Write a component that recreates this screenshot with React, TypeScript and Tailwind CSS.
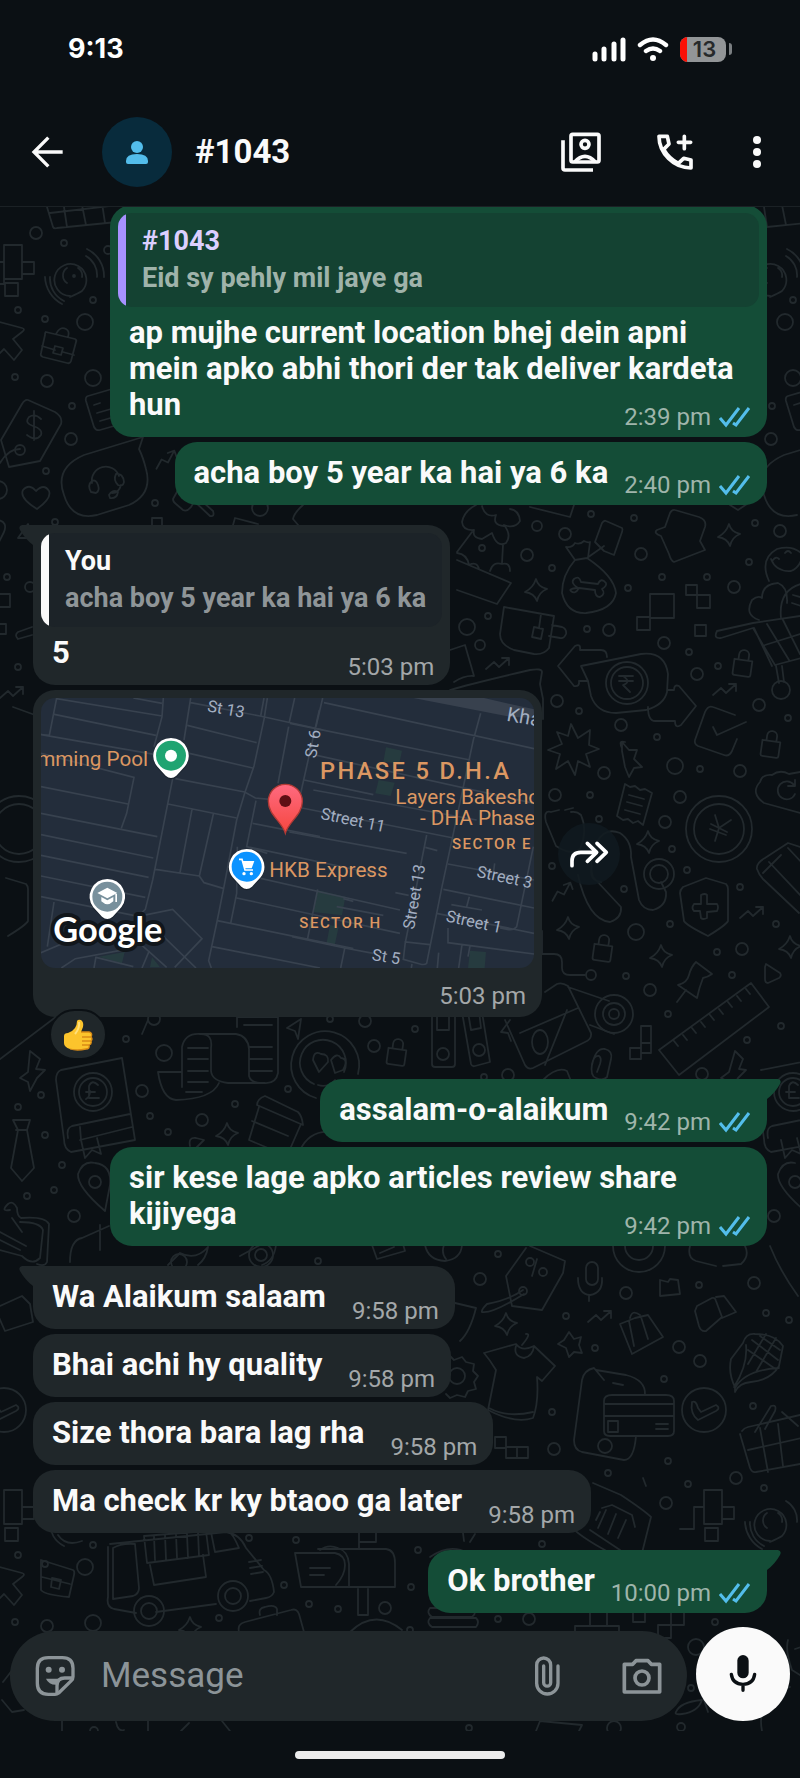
import type { ReactNode } from "react";
import clsx from "clsx";

const circles = [
  // x, y, r
  [36, 233, 6], [64, 243, 3], [108, 250, 4], [93, 300, 3], [18, 310, 3], [45, 319, 3], [85, 322, 8],
  [15, 377, 3], [47, 381, 6], [93, 378, 8], [72, 406, 3], [71, 439, 6], [46, 471, 3], [-2, 490, 9],
  [155, 503, 3], [260, 508, 8], [55, 522, 3], [7, 577, 3], [30, 587, 5], [18, 667, 3],
  [537, 526, 5], [591, 514, 3], [634, 518, 3], [565, 534, 6], [527, 555, 6], [482, 548, 3], [641, 554, 6],
  [552, 568, 3], [662, 577, 3], [707, 577, 3], [628, 588, 3], [734, 587, 6], [755, 523, 3], [780, 531, 6],
  [749, 562, 3], [488, 616, 3], [467, 627, 8], [480, 645, 5], [587, 629, 3], [609, 630, 6], [664, 643, 6],
  [689, 652, 3], [718, 666, 3], [697, 674, 6], [557, 701, 6], [579, 711, 3], [621, 725, 6], [657, 737, 3],
  [759, 705, 6], [788, 718, 3], [604, 773, 6], [675, 766, 8], [700, 769, 3], [740, 771, 6], [555, 795, 6],
  [590, 795, 3], [680, 797, 6], [599, 819, 3], [665, 822, 6], [672, 849, 3], [552, 866, 3], [687, 870, 3],
  [740, 887, 3], [624, 889, 3], [670, 924, 3], [636, 932, 8], [776, 924, 3], [717, 952, 3], [742, 949, 6],
  [591, 975, 5], [626, 976, 3], [732, 975, 3], [650, 990, 6],
  [668, 1014, 3], [747, 1040, 3], [781, 1026, 3], [365, 1021, 6], [330, 1019, 3], [415, 1029, 3],
  [154, 1019, 6], [126, 1039, 3], [164, 1053, 8], [374, 1046, 6], [142, 1091, 6], [41, 1095, 3],
  [18, 1107, 3], [150, 1116, 3], [235, 1104, 3], [288, 1089, 3], [202, 1120, 6], [168, 1132, 3],
  [45, 1135, 3], [62, 1165, 3], [54, 1190, 3], [27, 1196, 3], [74, 1216, 6], [484, 1077, 3], [508, 1075, 6],
  [702, 1074, 6], [318, 1261, 3], [498, 1254, 3], [480, 1279, 6], [699, 1285, 3], [626, 1293, 6],
  [754, 1283, 6], [566, 1316, 3], [766, 1313, 3], [789, 1320, 3], [679, 1347, 6], [595, 1348, 3],
  [700, 1361, 6], [664, 1379, 3], [552, 1412, 3], [753, 1406, 3], [554, 1449, 6], [668, 1461, 3],
  [608, 1473, 3], [736, 1478, 6], [688, 1484, 3], [764, 1488, 3], [666, 1503, 6], [542, 1544, 3],
  [418, 1550, 3], [249, 1538, 3], [296, 1540, 3], [284, 1585, 3], [309, 1604, 3], [338, 1609, 3],
  [411, 1587, 3], [385, 1608, 6], [410, 1630, 3], [219, 1618, 3], [498, 1619, 3], [529, 1619, 6],
  [715, 1622, 3], [696, 1647, 8], [691, 1688, 3], [614, 1728, 7], [681, 1727, 4], [469, 1728, 3],
];

const sparkles = [
  [536, 590], [729, 535], [648, 842], [568, 928], [661, 956], [790, 947], [227, 1134], [506, 1324],
  [190, 1628],
];

const locks = [[743, 663], [771, 744], [603, 948], [397, 1052]];

const arrows = [
  [498, 664, 0], [725, 690, 0], [752, 913, 0], [600, 1317, 0], [562, 892, -20], [166, 460, -20],
  [12, 693, 0],
];

function DoodleSheet() {
  return (
    <>
      {circles.map(([x, y, r], i) => (
        <circle key={i} cx={x} cy={y} r={r} />
      ))}
      {sparkles.map(([x, y], i) => (
        <path
          key={i}
          transform={`translate(${x} ${y})`}
          d="M0-11Q2-3 11-1Q3 2 1 11Q-2 3-11 2Q-3-2 0-11Z"
        />
      ))}
      {locks.map(([x, y], i) => (
        <path
          key={i}
          transform={`translate(${x} ${y}) rotate(8)`}
          d="M-9-3h18v14q0 2-2 2h-14q-2 0-2-2ZM-5-3v-5a5 5 0 0 1 10 0v5"
        />
      ))}
      {arrows.map(([x, y, turn], i) => (
        <path
          key={i}
          transform={`translate(${x} ${y}) rotate(${turn})`}
          d="M-12 5l8-7 5 5L11-6M4-6h7v7"
        />
      ))}

      {/* shopping basket, pixels, podcast */}
      <path d="M47 207l6 20q1 2 4 1l60-6M64 207l3 20M82 205l4 20M102 203l3 20M50 213l60-7" />
      <path d="M4 245h18v34H4ZM22 262h12v12H22ZM5 283h13v13H5ZM-8 262H4v22H-8" />
      <path d="M70 296a16 16 0 1 1 12-5q-3 2-12 6ZM67 283a9 9 0 0 1 0-15M78 268a9 9 0 0 1 4 9M86 256a22 22 0 0 1 11 21M87 249a30 30 0 0 1 17 28M50 277a25 25 0 0 0 14 24M45 277a32 32 0 0 0 17 27" />
      <circle cx="74" cy="276" r="1" />
      {/* cursor, briefcase, note, price tag */}
      <path d="M-8 320l30 8q4 1 0 4l-9 7 9 11-8 10-10-11-8 8" />
      <path d="M46 332l29 7q2 1 1 3l-5 19q-1 3-4 2l-24-6q-3-1-2-4l4-18q0-3 1-3ZM42 346l13 4M63 352l11 3M55 346l8 2-2 7-8-2ZM56 334q4-8 10-5 4 2 2 8" />
      <path d="M112 389l-24 7q-3 1-2 5l8 26q2 4 6 3l14-4M94 405l6-2M97 413l14-4M100 421l14-4" />
      <path d="M28 400l27 12q8 5 6 12l-21 37-31 6L1 440l21-36q3-5 6-4ZM34 411v29M41 419q-6-6-12-2-5 6 4 9 10 3 8 9-5 7-14 0M20 449q-12 0-20 14" />
      <circle cx="20" cy="450" r="5" />
      {/* support bubble and heart */}
      <path d="M143 437l-59 18q-30 13-20 40 8 26 33 20l32-10q24-11 17-36-3-12-7-20Z" />
      <path d="M92 483a14 14 0 0 1 27-7M92 481q-5 4-1 11l5 1q4-2 2-8-2-6-6-4ZM116 474q7-1 8 8-1 5-6 3-5-5-2-11ZM121 485q-2 8-9 8M109 495q3-6 9-3-1 7-8 6Z" />
      <path d="M37 509q-18-11-14-19 6-7 13 1 8-8 13 0 3 7-12 18Z" />
      <path d="M178 490l-5 9q0 3 3 5l7 6q4 2 8-3l3-5M193 500l17 16q5 1 3-5l-19-17M152 525v-7h10v7M233 525l2-7 23 6M303 505q-9 8-10 14l6 7" />
      <path d="M0 594h10v13H0M0 624h6v10H0M32 627l-14 5q-4 3 0 7l14-4M-2 520q10 2 6 12l-5 10M18 538l10-14 5 14Z" />

      {/* balloon dog, tea cup, money bag */}
      <path d="M476 505q-12 6-14 17 1 9 12 8-2 8 8 9l10-6q5 15 14 10 6-8-2-18 11 4 16-4-1-11-10-12M482 506q3 12 14 9-4 10 8 11M472 532l-15 20M503 545l-1 18M457 560l54 23-14 21-40-14M457 553q10 1 12 12 8-4 10 4M490 571q3-10 12-7 8-2 8 7" />
      <path d="M504 607l50 9-5 32q-5 7-15 6l-20-4q-14-5-14-16ZM541 614l-2 14M534 627l9 2-2 10-9-2ZM552 625l10 2q5 2 4 7-2 5-6 4l-11-2" />
      <path d="M450 650l15-5 9 31q-9-1-20 6" />
      <path d="M575 560q-13 15-13 33 5 21 24 20 27-3 30-20-2-17-29-35ZM575 560l-9-13q6 1 9-4 5 2 9-2 4 2 6 1l-2 16M587 558l17-12" />
      <path d="M578 588q-8-5-4-9 5-4 7 3l17 2q3-7 8-1 1 3-4 6 4 5-2 8-5 0-5-7l-16-2q-4 7-8 3-3-2 6-3Z" />
      <path d="M606 521l16 7q1 1 0 4l-8 23-10-4-9-9 7-19q2-3 4-2Z" />
      <path d="M450 690q20-6 80-20 12-2 12 2l-2 12 3 15v20" />
      <path d="M530 507l40 10 4-12M730 505l8 5 12-8" />
      {/* puzzle piece, pixels */}
      <path d="M675 510l24 7q8 3 6 10l-5 14 5 9-31 12q-3-1-5-8l-8-18q-8-3-4-6l8-3 5-14q2-4 5-3Z" />
      <path d="M650 594h24v24h-24ZM637 617h13v13h-13ZM686 585h11v10h-11ZM697 595h13v13h-13ZM695 625h11v11h-11Z" />
      {/* ice cream and trolley */}
      <path d="M769 581q-10-22 8-32 22-6 31 14M771 559q5 13 20 12 10-4 12-18M773 560q3-4 6-1M785 553q3-4 6 0M759 620q-15-5-7-20 6-5 10-2 0-14 16-15 10 4 9 20M781 618q-3-30 24-35M793 595l14 4M792 603l15 5" />
      <path d="M717 631q-4 8 4 7l32-10 22 37 30-8M717 631l36-8 47-7M754 628l18 38M767 624l22 36M783 620l17 34M765 645l35-11M776 666l3 17M782 666l2 16" />
      <circle cx="781" cy="690" r="9" />
      {/* rupee transfer */}
      <circle cx="627" cy="683" r="21" />
      <circle cx="627" cy="683" r="16" />
      <path d="M581 666l60-12q24-3 27 20l-1 18q-3 13-21 18l-30 3q-19 0-25-17l-3-15ZM607 657q0-7-6-7h-21q1-7-5-4l-17 20 16 20q6 1 5-5h9M668 690h6q0-6 5-4l17 20-15 19q-6 4-6-4h-20q-7 0-7-14" />
      <path d="M619 676h14M619 681h14M623 676q9 6 0 9l7 7" />
      <path d="M571 724l7 14 12-8-1 15 10 4-13 5 4 13-12-6-3 14-7-14-12 8 4-15-12-4 14-6-5-12 11 4ZM622 742l7 8 8 0-3 9 8 8-8 1-5 9-4-10-3-16ZM622 748q-4-8 3-6" />
      {/* checkbox, cloud, receipt */}
      <path d="M735 715l-22-8q-5-2-8 5l-10 28q-1 4 3 6l26 9q5 2 8-4l5-12M713 727l4 8 29-13" />
      <path d="M800 813l-36-10q-14-10-4-21 2-8 12-7 8-6 17-1l11-2" />
      <path d="M794 785a9 9 0 1 0 1 9M788 786h7v-6" />
      <path d="M625 784l5 3 5-1 5 4 5-1 7 4-9 32-5-4-5 2-5-4-5 1-6-4ZM629 795l15 4M627 802l15 4M625 810l15 4" />
      {/* yen coin, stethoscope, shield, pencil */}
      <circle cx="719" cy="829" r="33" />
      <circle cx="719" cy="829" r="25" />
      <path d="M715 815l4 13 12-8M719 828l-4 13M711 824l16 8M710 829l16 6" />
      <path d="M551 812q-8-2-5 10l10 24q15 10 24 3 8-18 1-34-4-4-10-3M551 812l8-2M565 810l8-2M578 875q10 45 32 47 12-4 11-15l-28-30q-5-15 4-35 8-15 23-9 12 8 11 24l8 43q4 10 14 10 14-4 13-18l-5-10M592 866q-4 14 9 16" />
      <circle cx="659" cy="874" r="15" />
      <circle cx="659" cy="874" r="9" />
      <path d="M706 878l20 6q2 2 2 5v32q-2 4-20 15-22-11-24-15l-4-28q0-3 3-6ZM701 895q4-2 6 0v9h10q2 3 0 7l-10 1v6q-4 2-6 0l-1-7h-6q-3-3 0-7h7Z" />
      <path d="M800 847l-12-4-23 15q-9 5-8 11 2 6 6 10l36 34M769 862l34 36M788 848l15 16M763 873l18-18" />

      {/* circuit, pushpins, ruler */}
      <path d="M542 931v23h12q8 0 8 8v6q0 7 8 7h15M696 962l16 12q-4 3-9 4-4 10-6 20l-19-13q9-2 11-10 2-8 7-13ZM686 990l-9 12M766 964l14 9q2 3-1 5l-11 5q-3 0-3-4v-12Z" />
      <path d="M751 983l18 24-90 68-20-25ZM746 989l4 5M737 996l4 5M728 1002l4 5M719 1009l4 5M710 1015l4 5M701 1022l4 5M692 1028l4 5M683 1035l4 5M674 1041l4 5" />
      {/* parcel and tape */}
      <path d="M545 992l12-8q5-2 11 2l23 47q1 6-6 9l-52 26q-5 2-8-3l-20-45M568 987l41 14M520 1033l58-25M545 1065l22-55M590 1025l24 9" />
      <circle cx="614" cy="1014" r="19" />
      <circle cx="614" cy="1014" r="11" />
      <circle cx="614" cy="1014" r="5" />
      <ellipse cx="540" cy="1042" rx="8" ry="12" />
      <path d="M432 1012h23v52q0 3-3 3h-17q-3 0-3-3ZM437 1012v18h12v-18M462 1012l9 52q1 3 4 2l15-4-8-50M468 1012l3 18 10-2-2-17" />
      <circle cx="443" cy="1054" r="6" />
      <circle cx="479" cy="1050" r="6" />
      <path d="M641 1026h10v17h-10ZM641 1043h10v10h-10ZM630 1048h11v11h-11ZM592 1065q4-18 13-16 8 2 6 10l-4 18q-4 4-11 1-6-2-4-14 2-9 7-8 3 2 1 8l-3 8" />
      {/* scroll and smiling face */}
      <path d="M237 1017h41v56q-2 11-14 10M237 1017v10M158 1072h24v-25q3-14 18-13h36q12 2 13 15v27q2 8 16 7h-37q-16-2-17-12v-23q2-14-10-14M158 1072q4 27 18 28 36-1 43-17M182 1072v15M188 1048h20M188 1059h20M188 1071h20M188 1082h20M186 1092h16M244 1025h28M250 1047h22M250 1059h22M250 1071h22" />
      <path d="M316 1098a34 34 0 1 1 42-24M314 1084a23 23 0 1 1 30-12M313 1060q1-10 8-6 8 0 7 8l-9 10ZM331 1060q6-8 10-2 8 1 2 12l-8 3ZM318 1085q10 3 17-5" />
      <path d="M301 1019l-14 9 8 3 3 8ZM148 1020l-6 14M510 1020l-9 12 7 1 3 8" />
      {/* passbook, coffee, tie */}
      <path d="M61 1070l61-12 13 82-64 12q-7-3-7-13L56 1080q0-8 5-10ZM68 1138q-2-10 4-12l58-12M80 1140l52-13M81 1140l4 18 7-8 9 4-4-16M80 1127l1 13" />
      <circle cx="93" cy="1092" r="19" />
      <circle cx="93" cy="1092" r="14" />
      <path d="M98 1085q-6-6-9 1v12h10M86 1092h9M86 1099q4-2 4-8" />
      <path d="M265 1096l33 16q4 4 5 13l-46-20q0-6 8-9ZM259 1107l-10 33 38 16 14-32M252 1121l36 15M13 1120h17l-3 10 7 38-12 13-11-13 7-38ZM16 1130h11" />
      <path d="M30 1051l10 8-4 10 9 1-8 8-7 13-2-9-8-4 8-6ZM735 1051l8 8-4 10 7 1-8 8-7 13-2-9-8-4 8-6ZM543 1080q14-14 24-9l4 10M300 1150q10-20 30-18M190 1146q-2-9 6-8l8 2-8 8" />
      {/* map pin, sticky notes */}
      <path d="M105 1211q-28-24-27-37 5-14 17-11 17 2 15 22Z" />
      <circle cx="95" cy="1182" r="6" />
      <path d="M10 1210q-10 2-2-6 5-4 9 4 0 8 4 10 24-2 28 6l-2 38q-2 5-10 2M20 1222q20 0 23 8l-3 28q-8 8-18-2l-22-6M0 1232l26 14M0 1240l20 10M12 1218l10 14M70 1262q0-22 12-24l27-12M100 1225v25" />
      {/* strip under the second outgoing run */}
      <path d="M168 1265l12-12q16 8 28-6M208 1247q-2 12-10 18M240 1256l20-11M262 1265q12-4 14-20M372 1245l5 14 28-8-2-7M380 1253l14-6M425 1245q3 15 20 16 16-2 17-16M444 1245q-3 8 2 14" />
      <circle cx="179" cy="1262" r="8" />
      <circle cx="261" cy="1255" r="12" />
      <circle cx="261" cy="1255" r="6" />
      <path d="M530 1246l35 15-2 12-21 37-30-4-6-30 20-28M523 1290q-14 10-36 14-6 6-5 8 10 2 42-18M537 1259l-5 17" />
      <circle cx="530" cy="1262" r="4" />
      <circle cx="543" cy="1272" r="4" />
      <circle cx="523" cy="1291" r="4" />
      <rect x="586" y="1262" width="12" height="23" rx="6" />
      <path d="M578 1278q0 16 12 17 13-2 12-17M589 1295v6" />
      <path d="M613 1246a26 26 0 0 0 52 0M625 1246a14 14 0 0 0 28 0M690 1246q-3 12 6 15l20 5M745 1246q5 10-4 18l-18 2M770 1246q10 25 28 50" />
      <path d="M660 1280l8 2 2-3 8 1 2 14-20 2ZM697 1306l15-8q3-1 4 3l6 16-16 14q-5 1-7-5l-4-15ZM716 1297l8-1 12 16-14 6M620 1324l15-6 13-3 15 22-31 17ZM634 1346l-5-25M648 1339l-7-22M630 1318q2-9 10-3" />
      <path d="M569 1332l5 7 7-2-2 8 3 8-8-1-5 5-3-9-8-4 6-4ZM0 1306l22-10 8 8 3 18-28 9-8-18M455 1303l21 5q-6 24-16 33" />
      {/* t-shirt */}
      <path d="M484 1353l32-9q6 8 18 2l21 20-13 15-5-4q2 25-4 41-18 6-45-8l8-40q-6-10-12-17ZM516 1346q-3 10 8 12 9-2 10-12M522 1345q10-12 4-11M489 1408q18 10 44 4" />
      {/* corn, phone and card, clock */}
      <path d="M735 1387q-7-14-4-28l12-16q3-10 12-9 20 0 28 12l-4 20q-8 14-28 16-12 1-16 10ZM746 1345q2 20-12 42M760 1336l20 14M752 1340l26 20M748 1350l26 18M776 1338l-20 34M766 1334l-18 30M735 1388q10-18 44-20" />
      <path d="M612 1395h54q8 0 8 6v30q0 5-6 5h-58q-6 0-6-5v-30q0-6 8-6ZM604 1404h70M604 1416h70M608 1421h10v11h-10ZM656 1424h12M656 1429h12M604 1380l-10-12q-10 2-12 12l-8 60q0 10 8 12l42 8q10 0 12-24M596 1370l30 5q20 5 19 20M613 1383l10 2" />
      <circle cx="605" cy="1446" r="7" />
      <circle cx="704" cy="1410" r="22" />
      <path d="M692 1402q4-2 6 6l3 4 15-7q5 3 0 6l-18 9q-8-6-6-18Z" />
      {/* picnic basket */}
      <path d="M742 1431q2-3 6-4l52-12M740 1434l10 34q2 5 6 4l44-8M748 1450l54-12M760 1428l8 44M778 1424l5 42M755 1432l16-26q6-2 4 5l-10 18M782 1412l16 14" />
      <circle cx="457" cy="1376" r="8" />
      <path d="M444 1358l6-2 4 4 8-3 4 5 8 2-1 7 5 5-4 6 2 7-8 2-3 6-8-2-7 3-4-4" />
      <path d="M495 1437h11v11h-11ZM506 1447h11v11h-11ZM517 1447h11v11h-11ZM643 1478l3 8M593 1483l28 12q24 16 30 22l-10 40q-20 4-45-12-20-12-24-18l4-16M602 1508l10-3 20 10 3 12M600 1512l-4 8M606 1510l-8 18M616 1514l-8 20M626 1520l-8 18M590 1530l30 20" />
      {/* street stall van */}
      <path d="M110 1544l116-12q14 2 20 16l18 22q8 4 10 22-2 5-8 6l-16 3M216 1604l-60 8M136 1613l-22-4q-8-2-6-12v-50M113 1548q8-5 22-4l4 44q0 6-6 8l-20 3ZM144 1536l62-5 3 24-62 8ZM150 1565l4 20 52-8-3-22M154 1536l1 24M165 1535l1 24M176 1534l1 24M187 1534l1 24M198 1532l1 24M211 1532l4 20 24-4q-6-14-10-16M249 1562l12-2M250 1568l12-2M251 1574l12-2" />
      <circle cx="149" cy="1611" r="15" />
      <circle cx="149" cy="1611" r="8" />
      <circle cx="233" cy="1596" r="15" />
      <circle cx="233" cy="1596" r="8" />
      {/* mailbox */}
      <path d="M318 1549h68q9 1 9 14v24h-94l-6-34h40q10 2 10 12t-9 20M320 1550q8-6 18-2 10 3 11 16v22M359 1530v18M359 1542h17v-12M310 1568h20M310 1575h14M358 1589v26h10v-26M430 1557q20-14 38-4M463 1533l1 8M475 1534l-5 8" />
      <path d="M239 1632q-2-8 6-10l46-12q6-2 8 4l5 18M260 1615q-2-7 5-8 10-3 12 2v6M350 1632q25-24 52-2M430 1608h42q6 4 0 9h-40q-6-4-2-9ZM430 1618h46q4 4 0 9h-44q-6-4-2-9ZM575 1632v-6h44v6M590 1612v14M607 1612v14M633 1612h12v10h-12ZM658 1625h13v13h-13ZM671 1612h13v13h-13ZM725 1612l-8-4" />
      <path d="M788 1640q-3 10 4 30l8 5M795 1649l6-2M676 1712q4-10 26-12-4 12-20 14-8 1-6-2ZM708 1712l-4-12 30 4M762 1731q-4-20 8-38l20-6M62 1731v-10M148 1721v10M181 1731l8-8M222 1721l8 10M90 1731a4 4 0 1 1 8 0M116 1722q2 10 8 8M3 1682l14-18M2 1700l10 12 12-2M536 1731l4-10 42 4-3 6" />
      <path d="M41 1560l32 10q2 1 1 5l-5 22q-24-2-28-7ZM42 1577l28 7M52 1578l9 2-2 9-8-2Z" />
    </>
  );
}

// one sheet is 700 x 1245 and repeats in both directions
function Wallpaper() {
  return (
    <svg
      className="pointer-events-none absolute inset-0 h-full w-full"
      fill="none"
      stroke="#22292d"
      strokeWidth="1.8"
      strokeLinejoin="round"
      strokeLinecap="round"
      aria-hidden="true"
    >
      <g transform="translate(0 -207)">
        <DoodleSheet />
        <g transform="translate(0 1245)">
          <path d="M4 245h18v34H4ZM22 262h12v12H22ZM5 283h13v13H5ZM704 245h18v34h-18ZM722 262h12v12h-12ZM705 283h13v13h-13ZM680 284h14v-22h10" />
          <path d="M-8 320l30 8q4 1 0 4l-9 7 9 11-8 10-10-11-8 8" />
          <path d="M770 296a16 16 0 1 1 12-5q-3 2-12 6ZM767 283a9 9 0 0 1 0-15M778 268a9 9 0 0 1 4 9M786 256a22 22 0 0 1 11 21M750 277a25 25 0 0 0 14 24M745 277a32 32 0 0 0 17 27M50 277a25 25 0 0 0 14 24M58 290q8 12 24 6" />
          <circle cx="93" cy="300" r="3" />
          <circle cx="18" cy="310" r="3" />
          <circle cx="45" cy="319" r="3" />
          <circle cx="85" cy="322" r="8" />
          <circle cx="15" cy="377" r="3" />
          <circle cx="47" cy="381" r="6" />
          <circle cx="93" cy="378" r="8" />
        </g>
        <g transform="translate(700 0)">
          <path d="M47 207l6 20q1 2 4 1l60-6M64 207l3 20M82 205l4 20" />
          <path d="M70 296a16 16 0 1 1 12-5q-3 2-12 6ZM67 283a9 9 0 0 1 0-15M78 268a9 9 0 0 1 4 9M86 256a22 22 0 0 1 11 21M87 249a30 30 0 0 1 17 28" />
          <path d="M112 389l-24 7q-3 1-2 5l8 26q2 4 6 3M94 405l6-2M143 437l-59 18q-30 13-20 40 8 26 33 20M61 1070l61-12M56 1080l8 59q0 10 7 13l64-12M68 1138q-2-10 4-12l58-12M81 1140l4 18 7-8 9 4-4-16" />
          <circle cx="85" cy="322" r="8" />
          <circle cx="93" cy="300" r="3" />
          <circle cx="93" cy="378" r="8" />
          <circle cx="72" cy="406" r="3" />
          <circle cx="71" cy="439" r="6" />
          <circle cx="93" cy="1092" r="19" />
          <circle cx="93" cy="1092" r="14" />
          <path d="M98 1085q-6-6-9 1v12h10M86 1092h9M105 1211q-28-24-27-37 5-14 17-11" />
          <circle cx="95" cy="1182" r="6" />
          <circle cx="74" cy="1216" r="6" />
        </g>
        <g transform="translate(-700 0)">
          <circle cx="704" cy="1410" r="22" />
          <circle cx="719" cy="829" r="33" />
          <circle cx="719" cy="829" r="25" />
          <path d="M692 1402q4-2 6 6l3 4 15-7q5 3 0 6l-18 9q-8-6-6-18ZM706 878l20 6q2 2 2 5v32q-2 4-20 15M735 715l-22-8M751 983l18 24-90 68" />
        </g>
      </g>
    </svg>
  );
}

function Ticks() {
  return (
    <svg className="h-[21px] w-8 shrink-0" viewBox="0 0 32 21" fill="none" stroke="#53bdeb" strokeWidth="3" role="img" aria-label="Read">
      <path d="M1 11L7 18L20 1M14 16L17 18L30 1" />
    </svg>
  );
}

function Meta({ time, outgoing }: { time: string; outgoing?: boolean }) {
  return (
    <span
      className={clsx(
        "flex shrink-0 items-center gap-2 text-[24px] leading-7 font-normal whitespace-nowrap",
        outgoing ? "pb-1.5 text-[#9fb5ab]" : "pb-1 text-[#a3a7a9]"
      )}
    >
      <time>{time}</time>
      {outgoing && <Ticks />}
    </span>
  );
}

function Quote({ author, text, outgoing }: { author: string; text: string; outgoing?: boolean }) {
  return (
    <blockquote
      className={clsx(
        "flex overflow-hidden rounded-[14px] text-[27px] leading-[37px] font-bold",
        outgoing ? "bg-[#144232]" : "bg-[#1c2328]"
      )}
    >
      <span className={clsx("w-2 shrink-0", outgoing ? "bg-[#a791ff]" : "bg-[#fafafa]")} />
      <div className="py-2.5 pr-4 pl-4">
        <cite className={clsx("block not-italic", outgoing ? "text-[#dccfff]" : "text-[#fafafa]")}>{author}</cite>
        <p className={outgoing ? "text-[#9fb3aa]" : "text-[#8f9598]"}>{text}</p>
      </div>
    </blockquote>
  );
}

type BubbleProps = {
  outgoing?: boolean;
  tail?: boolean;
  className?: string;
  children: ReactNode;
};

function Bubble({ outgoing, tail, className, children }: BubbleProps) {
  return (
    <div
      className={clsx(
        "relative flex w-fit max-w-[657px] flex-col rounded-[22px]",
        outgoing ? "self-end bg-[#144d37]" : "self-start bg-[#20272a]",
        tail && (outgoing ? "rounded-tr-none" : "rounded-tl-none"),
        className
      )}
    >
      {tail && (
        <svg
          className={clsx("absolute top-0 h-5 w-3.5", outgoing ? "left-full" : "right-full -scale-x-100")}
          viewBox="0 0 14 20"
          fill={outgoing ? "#144d37" : "#20272a"}
          aria-hidden="true"
        >
          <path d="M0 0H11Q15 1 13 5Q8 14 0 20Z" />
        </svg>
      )}
      {children}
    </div>
  );
}

type MessageProps = {
  text: string;
  time: string;
  outgoing?: boolean;
  tail?: boolean;
  long?: boolean;
  quote?: { author: string; text: string };
  className?: string;
};

function Message({ text, time, outgoing, tail, long, quote, className }: MessageProps) {
  return (
    <Bubble outgoing={outgoing} tail={tail} className={className}>
      {quote && (
        <div className="px-2 pt-2">
          <Quote {...quote} outgoing={outgoing} />
        </div>
      )}
      {long ? (
        // the time floats into the free end of the last line
        <p className={clsx("flow-root pr-4 pl-[19px] text-[31px] leading-9 font-bold text-[#fafafa]", quote ? "pt-2" : "pt-[13px]")}>
          {text}
          <span className="float-right mt-4">
            <Meta time={time} outgoing={outgoing} />
          </span>
        </p>
      ) : (
        <div
          className={clsx(
            "flex items-end justify-between pr-4 pl-[19px]",
            quote ? "pt-2" : "pt-[13px]",
            outgoing ? "gap-4" : "gap-6.5"
          )}
        >
          <p className="pb-3.5 text-[31px] leading-9 font-bold text-[#fafafa]">{text}</p>
          <Meta time={time} outgoing={outgoing} />
        </div>
      )}
    </Bubble>
  );
}

function Marker({ x, y, fill, children }: { x: number; y: number; fill: string; children: ReactNode }) {
  return (
    <g transform={`translate(${x} ${y})`}>
      <path d="M0-53A53 53 0 0 1 42 32L16 60Q0 74-16 60L-42 32A53 53 0 0 1 0-53Z" fill="#10161d" opacity=".4" transform="translate(0 4)" />
      <path d="M0-53A53 53 0 0 1 42 32L16 60Q0 74-16 60L-42 32A53 53 0 0 1 0-53Z" fill="#fff" />
      <circle r="45" fill={fill} />
      {children}
    </g>
  );
}

function LocationMap() {
  return (
    <svg
      className="block h-auto w-[493px] max-w-full rounded-[14px] font-[Roboto,sans-serif]"
      viewBox="63 54 1479 810"
      role="img"
      aria-label="Map of Phase 5 D.H.A"
    >
      <defs>
        <linearGradient id="pin" x1="0" y1="0" x2="0" y2="1">
          <stop offset="0" stopColor="#ff6a80" />
          <stop offset="1" stopColor="#f5473f" />
        </linearGradient>
      </defs>
      <path d="M63 54H1542V864H63Z" fill="#232d3b" />
      <g fill="#263b3f">
        <path d="M1098 202L1146 212L1138 250L1090 246ZM1076 300L1124 308L1112 348L1066 340ZM890 630L976 650L966 706L880 696ZM930 735L956 740L944 796L920 788ZM1350 812L1398 816L1394 864H1344ZM236 830L314 816L306 850ZM396 832L420 862H390Z" />
      </g>
      <path d="M1180 54H1392L1542 88V114L1470 110Z" fill="#38414e" />
      <g fill="none" stroke="#38424f" strokeWidth="5">
        <path d="M110 54L88 166L63 164L420 226M103 103L408 166M110 56L426 108M340 54L426 70M430 54L426 110L402 200M512 54L492 180M512 68L720 108L910 150M502 136L710 188M508 220L698 264M742 54L732 118L702 258L674 340L650 420L612 620L592 720L566 842L574 864" />
        <path d="M732 54L722 108M824 54L808 126M806 140L774 310M898 90L842 340M63 220L342 292L320 400L304 445M63 320L324 372M63 400L412 470M63 464L400 534M63 526L386 592M63 588L376 652M63 650L370 712M458 296L398 600L376 688L360 704M466 296L674 336L706 354L750 358M444 372L650 414M516 388L480 578M580 402L538 588L552 608L612 626M406 568L538 588" />
        <path d="M708 362L680 500L742 520M698 430L900 470M690 502L1060 580M652 500L650 640L632 730M700 590L1140 690M650 654L1140 760M592 722L1000 806M576 800L900 864M893 628L862 780M102 666L82 800M63 818L130 790M124 864L166 836L330 806M228 830L222 864M228 832L340 860M388 812L366 864M370 706L458 688L546 776L464 862M400 740L528 864M366 796L440 862" />
        <path d="M912 68L1542 206M810 130L1350 240M908 54L888 140M890 226L1542 370M852 300L1060 344M846 384L1300 474M1382 100L1360 180L1298 470L1266 620L1220 850Q1214 856 1200 852L1150 838L1156 786L1230 794M808 456L1160 520M1220 465L1156 788M1216 502L1252 512M1284 552L1542 600M1424 550L1420 580M1270 628L1542 684M1294 674L1386 690M1348 650L1340 680M1126 638L1166 646M970 656L1000 664M950 680L1090 706M1540 500L1490 740Q1480 752 1462 748L1440 744M1250 700L1542 760M1284 744V788L1542 822M1326 794L1316 864M1350 798L1344 830M1256 818L1252 864M974 806L962 864M974 804L1060 820M816 770L974 804M1176 852L1174 864M880 330L1370 420" />
      </g>
      <g fill="#a3afc2" fontSize="49">
        <text transform="translate(560 94) rotate(10)">St 13</text>
        <text transform="translate(888 236) rotate(-80)">St 6</text>
        <text transform="translate(900 416) rotate(12)">Street 11</text>
        <text transform="translate(1182 750) rotate(-80)">Street 13</text>
        <text transform="translate(1368 590) rotate(12)">Street 3</text>
        <text transform="translate(1276 724) rotate(12)">Street 1</text>
        <text transform="translate(1054 840) rotate(9)">St 5</text>
        <text transform="translate(1458 122) rotate(10)" fontSize="60">Kha</text>
      </g>
      <g fill="#db9762" fontSize="62">
        <text x="384" y="258" textAnchor="end">mming Pool</text>
        <text x="748" y="590">HKB Express</text>
        <text x="1126" y="372">Layers Bakesho</text>
        <text x="1200" y="434">- DHA Phase</text>
        <text className="tracking-widest" x="900" y="297" fontSize="71" fontWeight="500">PHASE 5 D.H.A</text>
        <g className="tracking-widest" fontSize="45" fontWeight="500">
          <text x="1296" y="508">SECTOR E</text>
          <text x="838" y="743">SECTOR H</text>
        </g>
      </g>
      <Marker x={453} y={227} fill="#1fa471">
        <circle r="18" fill="#fff" />
      </Marker>
      <Marker x={680} y={560} fill="#0c93ff">
        <path d="M-23-22h9l9 32h24" fill="none" stroke="#fff" strokeWidth="5" />
        <path d="M-13-17H23L15 5H-7Z" fill="#fff" />
        <circle cx="-8" cy="21" r="5" fill="#fff" />
        <circle cx="14" cy="21" r="5" fill="#fff" />
      </Marker>
      <Marker x={262} y={650} fill="#78909c">
        <path d="M0-27L30-11L0 5L-30-11ZM-18 1L0 11L18 1V14Q8 23 0 23T-18 14ZM24-8H29V16H24Z" fill="#fff" />
      </Marker>
      <path d="M796 460C786 425 745 405 745 364A51 51 0 0 1 847 364C847 405 806 425 796 460Z" fill="url(#pin)" stroke="#b23a35" strokeWidth="4" />
      <circle cx="796" cy="363" r="18" fill="#5f0f14" />
      <text
        className="font-[Lato,sans-serif]"
        x="100"
        y="785"
        fontSize="103"
        fontWeight="700"
        fill="#fff"
        stroke="#11161b"
        strokeWidth="24"
        strokeLinejoin="round"
        paintOrder="stroke"
      >
        Google
      </text>
    </svg>
  );
}

function ThumbsUp() {
  return (
    <svg className="h-8 w-[30px]" viewBox="0 0 30 32" role="img" aria-label="Thumbs up">
      <path d="M1 17Q1 14 5 14Q9 13 12 9Q14 6 14 2Q15 0 18 1Q21 3 20 8L18 13H26Q30 14 28 18Q30 20 28 22Q29 25 26 26Q27 30 23 30Q14 32 7 30Q1 28 1 24Z" fill="#fcc42c" />
      <path d="M18 13H26Q30 14 28 18H19M28 18Q30 20 28 22H19M28 22Q29 25 26 26H19M26 26Q27 30 23 30Q14 32 7 30" fill="none" stroke="#d98b16" strokeWidth="1.3" />
      <path d="M16 3Q17 9 12 15" fill="none" stroke="#ffe07a" strokeWidth="2" />
    </svg>
  );
}

function StatusBar() {
  return (
    <div className="flex h-[98px] items-center justify-between pr-[68px] pl-[68px]">
      <span className="font-[Inter,sans-serif] text-[27px] leading-8 font-bold text-white">9:13</span>
      <div className="flex items-center gap-[11px]">
        <svg className="h-[25px] w-[34px]" viewBox="0 0 34 25" stroke="#fff" strokeWidth="5" strokeLinecap="round" aria-hidden="true">
          <path d="M3 17V22M12 12V22M22 7V22M31 3V22" />
        </svg>
        <svg className="h-[25px] w-8" viewBox="0 0 32 25" fill="none" stroke="#fff" strokeWidth="4.4" strokeLinecap="round" aria-hidden="true">
          <path d="M3 8Q16-3 29 8M9 14Q16 9 23 14" />
          <circle cx="16" cy="21" r="3" fill="#fff" stroke="none" />
        </svg>
        <div className="flex items-center gap-[3px]">
          <div className="flex h-[25px] w-[46px] items-center overflow-hidden rounded-[8px] bg-[#929597]">
            <span className="h-full w-[7px] bg-[#fb1006]" />
            <span className="flex-1 pr-1 text-center font-[Inter,sans-serif] text-[22px] leading-6 font-semibold text-[#26292b]">13</span>
          </div>
          <span className="h-3 w-[3px] rounded-r-full bg-[#7b7f82]" />
        </div>
      </div>
    </div>
  );
}

function AppBar() {
  return (
    <div className="flex h-[108px] items-center pr-[23px] pl-[27px] text-[#fafafa]">
      <button type="button" aria-label="Back">
        <svg className="size-10" viewBox="82 397 120 120" fill="none" stroke="currentColor" strokeWidth="10">
          <path d="M146 414L103 457L146 500M103 457H189" />
        </svg>
      </button>
      <div className="ml-[35px] flex size-[70px] items-center justify-center rounded-full bg-[#082b3c]">
        <svg className="size-6" viewBox="0 0 24 24" fill="#53bdeb" aria-hidden="true">
          <circle cx="12" cy="7" r="6" />
          <path d="M1 21Q1 14 12 14T23 21V22Q23 24 21 24H3Q1 24 1 22Z" />
        </svg>
      </div>
      <h1 className="ml-[23px] flex-1 text-[33px] leading-10 font-bold">#1043</h1>
      <button type="button" aria-label="Contact photos">
        <svg className="size-10" viewBox="483 396 120 120" fill="none" stroke="currentColor" strokeWidth="11">
          <rect x="513" y="403" width="84" height="83" rx="5" />
          <path d="M489 421V504Q489 510 495 510H579M524 486Q555 452 586 486" />
          <circle cx="555" cy="433" r="12" />
        </svg>
      </button>
      <button type="button" aria-label="Call" className="ml-[54px]">
        <svg className="size-10" viewBox="766 396 120 120" fill="none" stroke="currentColor" strokeWidth="11" strokeLinejoin="round">
          <path d="M778 409H803L808 432L792 448C803 467 817 480 836 490L852 475L874 480V504C822 504 778 460 778 409Z" />
          <path d="M854 409V446M836 427H873" strokeLinecap="round" />
        </svg>
      </button>
      <button type="button" aria-label="More options" className="ml-[42px]">
        <svg className="size-10" viewBox="0 0 40 40" fill="currentColor">
          <circle cx="20" cy="8" r="4" />
          <circle cx="20" cy="20" r="4" />
          <circle cx="20" cy="32" r="4" />
        </svg>
      </button>
    </div>
  );
}

function Composer() {
  return (
    <form className="relative flex items-end gap-[9px] px-2.5 pb-2.5" onSubmit={(e) => e.preventDefault()}>
      <div className="flex h-[90px] min-w-0 flex-1 items-center rounded-full bg-[#20272a] px-[25px] text-[#8c9498]">
        <button type="button" aria-label="Stickers">
          <svg className="size-10" viewBox="105 168 120 120" fill="none" stroke="currentColor" strokeWidth="10" strokeLinejoin="round">
            <path d="M145 173H187Q219 173 219 205V230Q219 237 214 242L176 279Q171 283 165 283H145Q112 283 112 250V205Q112 173 145 173Z" />
            <path d="M171 280V258Q171 234 194 234H216" />
            <path d="M138 236H184L172 254Q147 256 138 236Z" fill="currentColor" stroke="none" />
            <circle cx="146" cy="209" r="9" fill="currentColor" stroke="none" />
            <circle cx="186" cy="209" r="9" fill="currentColor" stroke="none" />
          </svg>
        </button>
        <input
          type="text"
          aria-label="Message"
          placeholder="Message"
          className="ml-[26px] min-w-0 flex-1 bg-transparent text-[35px] leading-10 text-[#fafafa] outline-none placeholder:text-[#8c9498]"
        />
        <button type="button" aria-label="Attach">
          <svg className="size-10" viewBox="382 168 120 120" fill="none" stroke="currentColor" strokeWidth="10" strokeLinecap="round">
            <path d="M475 198V250A32 32 0 0 1 411 250V195A21 21 0 0 1 453 195V248A10 10 0 0 1 432 248V198" />
          </svg>
        </button>
        <button type="button" aria-label="Camera" className="ml-[55px]">
          <svg className="size-10" viewBox="666 168 120 120" fill="none" stroke="currentColor" strokeWidth="11" strokeLinejoin="round">
            <path d="M673 193H698L708 182H744L754 193H779V276H673Z" />
            <circle cx="726" cy="234" r="21" />
          </svg>
        </button>
      </div>
      <button
        type="button"
        aria-label="Record voice message"
        className="flex size-[94px] shrink-0 items-center justify-center rounded-full bg-[#fafafa] text-[#0b1014]"
      >
        <svg className="size-10" viewBox="970 162 120 120" fill="none" stroke="currentColor" strokeWidth="10" strokeLinecap="round">
          <rect x="1013" y="165" width="34" height="70" rx="17" fill="currentColor" stroke="none" />
          <path d="M995 223Q999 253 1030 253T1065 223M1030 254V271" />
        </svg>
      </button>
    </form>
  );
}

export default function App() {
  return (
    <div className="min-h-screen bg-[#0b1014] font-[Roboto,sans-serif]">
      <header className="relative z-10 border-b border-[#1b2125] bg-[#0b1014]">
        <StatusBar />
        <AppBar />
      </header>

      <main className="relative overflow-hidden">
        <Wallpaper />

        <div className="relative -mt-0.5 flex flex-col gap-[5px] px-[33px] pb-[14px]">
          <Message
            outgoing
            long
            quote={{ author: "#1043", text: "Eid sy pehly mil jaye ga" }}
            text="ap mujhe current location bhej dein apni mein apko abhi thori der tak deliver kardeta hun"
            time="2:39 pm"
          />
          <Message outgoing text="acha boy 5 year ka hai ya 6 ka" time="2:40 pm" />

          <Message
            tail
            className="mt-[15px]"
            quote={{ author: "You", text: "acha boy 5 year ka hai ya 6 ka" }}
            text="5"
            time="5:03 pm"
          />

          <div className="flex items-center gap-4">
            <Bubble className="px-2 pt-2">
              <LocationMap />
              <div className="self-end pt-3.5 pr-2 pb-[3px]">
                <Meta time="5:03 pm" />
              </div>
              <button
                type="button"
                className="absolute -bottom-[43px] left-4 flex h-[51px] w-[58px] items-center justify-center rounded-full border-2 border-[#0b1014] bg-[#20272a]"
              >
                <ThumbsUp />
              </button>
            </Bubble>
            <button
              type="button"
              aria-label="Forward"
              className="flex size-[62px] items-center justify-center rounded-full bg-[#101a20]/85 text-white"
            >
              <svg className="size-10" viewBox="836 461 120 120" fill="none" stroke="currentColor" strokeWidth="11" strokeLinecap="round" strokeLinejoin="round">
                <path d="M845 556V542Q845 516 871 516H918M891 489L919 516L891 543M920 489L948 516L920 543" />
              </svg>
            </button>
          </div>

          <Message outgoing tail className="mt-[57px]" text="assalam-o-alaikum" time="9:42 pm" />
          <Message outgoing long text="sir kese lage apko articles review share kijiyega" time="9:42 pm" />

          <Message tail className="mt-[15px]" text="Wa Alaikum salaam" time="9:58 pm" />
          <Message text="Bhai achi hy quality" time="9:58 pm" />
          <Message text="Size thora bara lag rha" time="9:58 pm" />
          <Message text="Ma check kr ky btaoo ga later" time="9:58 pm" />

          <Message outgoing tail className="mt-3" text="Ok brother" time="10:00 pm" />
        </div>

        <Composer />
      </main>

      <footer className="flex h-[47px] justify-center pt-5">
        <div className="h-2 w-[210px] rounded-full bg-[#ececec]" />
      </footer>
    </div>
  );
}
